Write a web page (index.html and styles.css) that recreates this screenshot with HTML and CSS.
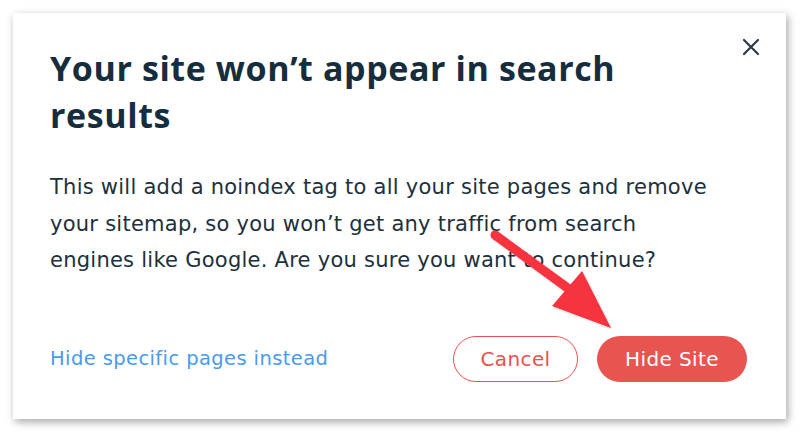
FILE: index.html
```html
<!DOCTYPE html>
<html>
<head>
<meta charset="utf-8">
<link rel="stylesheet" href="styles.css">
</head>
<body>
<div class="card">
  <button class="close" aria-label="Close">
    <svg width="18" height="18" viewBox="0 0 18 18"><path d="M2 2 L16 16 M16 2 L2 16" stroke="#2b3a48" stroke-width="2.2" stroke-linecap="round"/></svg>
  </button>
  <h1 class="title">Your site won’t appear in search results</h1>
  <p class="text">This will add a noindex tag to all your site pages and remove your sitemap, so you won’t get any traffic from search engines like Google. Are you sure you want to continue?</p>
  <div class="footer">
    <a class="link" href="#">Hide specific pages instead</a>
    <div class="actions">
      <button class="btn btn-outline">Cancel</button>
      <button class="btn btn-primary">Hide Site</button>
    </div>
  </div>
  <svg class="arrow" width="140" height="110" viewBox="0 0 140 110">
    <path d="M8 8 L82 62" stroke="#f7333f" stroke-width="9" stroke-linecap="round"/>
    <polygon points="95,44 65,79 124,101" fill="#f7333f"/>
  </svg>
</div>
</body>
</html>
```
FILE: styles.css
```css
html, body { margin: 0; padding: 0; background: #fff; }
body { width: 800px; height: 436px; overflow: hidden; font-family: "DejaVu Sans", "Open Sans", sans-serif; }
.card {
  position: relative;
  box-sizing: border-box;
  margin: 13px 0 0 13px;
  width: 773px;
  height: 406px;
  background: #fff;
  box-shadow: 2px 3px 8px rgba(0,0,0,0.35);
  padding: 32px 37px 0 37px;
  color: #1e2c38;
}
.close {
  position: absolute; top: 25px; right: 26px;
  border: 0; background: none; padding: 0; width: 18px; height: 18px;
}
.close svg { display: block; }
.title {
  margin: 0;
  font-family: "Open Sans", sans-serif;
  font-size: 34px; line-height: 47px; font-weight: 700;
  width: 600px; color: #162d3d; letter-spacing: 0.6px;
}
.text {
  margin: 30px 0 0;
  font-size: 21px; line-height: 36.5px; font-weight: 400; letter-spacing: 0.25px;
  color: #20303c; width: 665px;
}
.footer {
  display: flex; align-items: center; justify-content: space-between;
  margin-top: 57px; padding-right: 2px;
}
.link { color: #4a9bea; font-size: 19.5px; letter-spacing: 0.4px; text-decoration: none; }
.actions { display: flex; gap: 19px; }
.btn {
  font-family: inherit; font-size: 20px; letter-spacing: 0.4px; height: 46px; border-radius: 23px; box-sizing: border-box;
}
.btn-outline { width: 125px; background: #fff; color: #e8524e; border: 1.5px solid #e8524e; }
.btn-primary { width: 150px; background: #e8544f; color: #fff; border: 0; }
.arrow { position: absolute; left: 474px; top: 214px; filter: drop-shadow(1px 1px 1px rgba(0,0,0,0.2)); }
```
